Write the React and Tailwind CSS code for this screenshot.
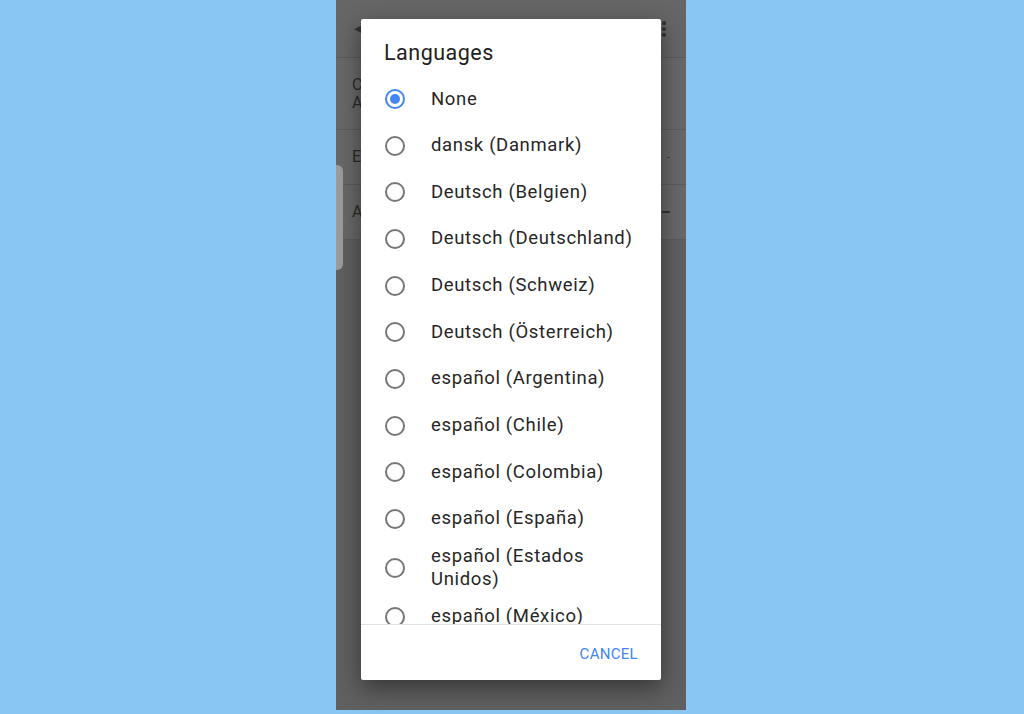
import { EllipsisVertical } from 'lucide-react';

const languages = [
  'None',
  'dansk (Danmark)',
  'Deutsch (Belgien)',
  'Deutsch (Deutschland)',
  'Deutsch (Schweiz)',
  'Deutsch (Österreich)',
  'español (Argentina)',
  'español (Chile)',
  'español (Colombia)',
  'español (España)',
  'español (Estados Unidos)',
  'español (México)',
];

const Radio = ({ checked }) =>
  checked ? (
    <div className="w-[20px] h-[20px] shrink-0 rounded-full border-2 border-[#4285f4] flex items-center justify-center">
      <div className="w-[10px] h-[10px] rounded-full bg-[#4285f4]" />
    </div>
  ) : (
    <div className="w-[20px] h-[20px] shrink-0 rounded-full border-2 border-[#767676]" />
  );

const App = () => {
  return (
    <div
      className="w-full h-[714px] bg-[#89c6f4] flex pl-[336px] overflow-hidden"
      style={{ fontFamily: 'Roboto, "Noto Sans", sans-serif' }}
    >
      {/* Phone */}
      <div className="relative w-[350px] h-[710px] bg-[#606060] flex flex-col">
        {/* App bar behind the dim */}
        <div className="h-[58px] shrink-0 bg-[#666666] border-b border-[#5a5a5a] flex items-center justify-between pl-[18px] pr-[12px]">
          <span className="text-[#333] text-[14px]">◀</span>
          <EllipsisVertical size={20} className="text-[#333]" strokeWidth={3} />
        </div>
        <div className="h-[72px] shrink-0 bg-[#686868] border-b border-[#5c5c5c] flex flex-col justify-center pl-[16px] text-[#2a2a2a] text-[16px] leading-[18px]">
          <span>C</span>
          <span>A</span>
        </div>
        <div className="h-[55px] shrink-0 bg-[#686868] border-b border-[#5c5c5c] flex items-center justify-between pl-[16px] pr-[16px] text-[#2a2a2a] text-[16px]">
          <span>E</span>
          <span className="w-[3px] h-px bg-[#444]" />
        </div>
        <div className="h-[55px] shrink-0 bg-[#686868] border-b border-[#5c5c5c] flex items-center justify-between pl-[16px] pr-[16px] text-[#2a2a2a] text-[16px]">
          <span>A</span>
          <span className="w-[8px] h-[2px] bg-[#333]" />
        </div>
        <div className="flex-1" />

        {/* Edge handle */}
        <div className="absolute left-0 top-[165px] w-[7px] h-[105px] rounded-r-[6px] bg-[#9c9c9c]" />

        {/* Dialog */}
        <div className="absolute left-[25px] top-[19px] w-[300px] h-[661px] bg-white rounded-[2px] shadow-[0_8px_24px_rgba(0,0,0,0.45)] flex flex-col">
          <div className="h-[56.7px] shrink-0 pl-[23px] pt-[20px] text-[21.5px] leading-[28px] tracking-[0.5px] text-[#212121]">
            Languages
          </div>
          <div className="flex-1 overflow-hidden border-b border-[#e2e2e2]">
            {languages.map((lang, i) => (
              <div key={lang} className="min-h-[46.67px] py-[2.5px] flex items-center pl-[24px] pr-[22px]">
                <Radio checked={i === 0} />
                <span className="ml-[26px] text-[18.5px] leading-[23px] tracking-[0.65px] text-[#262626]">{lang}</span>
              </div>
            ))}
          </div>
          <div className="h-[55px] shrink-0 flex items-center justify-end pr-[23px] pt-[3px]">
            <span className="text-[15px] tracking-[0.3px] text-[#4285f4]">CANCEL</span>
          </div>
        </div>
      </div>
    </div>
  );
};

export default App;
